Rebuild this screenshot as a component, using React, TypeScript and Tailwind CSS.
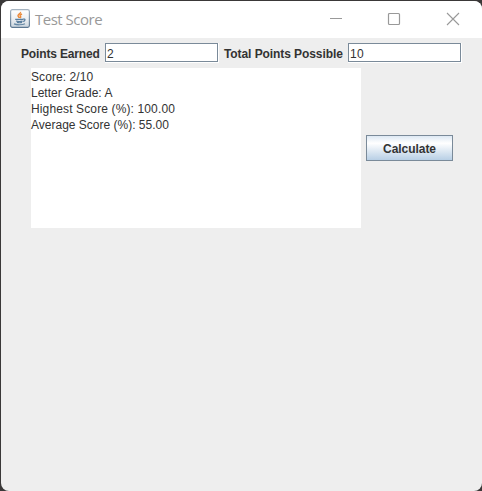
import React from "react";

function JavaIcon() {
  return (
    <svg width="20" height="19" viewBox="0 0 20 19" fill="none" className="mb-0.5 shrink-0">
      <defs>
        <linearGradient id="tile" x1="0" y1="0" x2="0" y2="1">
          <stop offset="0" stopColor="#ffffff" />
          <stop offset="0.5" stopColor="#edf0f3" />
          <stop offset="1" stopColor="#cbd5de" />
        </linearGradient>
        <linearGradient id="edge" x1="0" y1="0" x2="0" y2="1">
          <stop offset="0" stopColor="#a5b3c0" />
          <stop offset="1" stopColor="#5d7892" />
        </linearGradient>
      </defs>
      <rect x="0.6" y="0.6" width="18.8" height="17.8" rx="1.8" fill="url(#tile)" stroke="url(#edge)" strokeWidth="1.2" />
      <path d="M10.4 3c.9 1.5-2.8 2.2-2.4 3.9.2.8 1.2 1.3 1.3 2.1M12 5c-1.8.8-2.3 1.4-1.6 2.2.7.7.2 1.3-.5 1.8" stroke="#ec8b3c" strokeWidth="1.5" />
      <path d="M5.2 10.4h7.8M6 12c2 .6 4.5.6 6.5 0M7 13.4c1.6.4 3.6.4 5 0M13 10.2c2.8-.8 2.6 1.9-.2 2.3" stroke="#5b7f9f" strokeWidth="1.2" />
      <path d="M4 14.9c2.5 1.2 8.5 1.2 11-.2" stroke="#6688a5" strokeWidth="1.2" />
    </svg>
  );
}

function Field({ value }: { value: string }) {
  return (
    <div className="h-5 w-[114px] shrink-0 border-r border-b border-white">
      <div className="h-[19px] w-[113px] border border-[#7a8a99] bg-white pt-px pl-px text-[12px] leading-[19px] tracking-[0.3px]">
        {value}
      </div>
    </div>
  );
}

export default function App() {
  return (
    <div className="h-[491px] w-[482px] overflow-hidden bg-[#3a3838] pt-px pl-px font-['Liberation_Sans',Arial,sans-serif] text-[12px] text-[#333333]">
      <div className="flex h-[490px] w-[481px] flex-col overflow-hidden rounded-lg bg-[#eeeeee]">
        <header className="flex h-[37px] shrink-0 items-center bg-white pl-[9px]">
          <JavaIcon />
          <h1 className="ml-[5px] w-[295px] pb-px font-['Open_Sans','Noto_Sans',sans-serif] text-[15px] leading-5 font-normal tracking-[-0.5px] text-[#999999]">
            Test Score
          </h1>
          <svg width="132" height="15" viewBox="0 0 132 15" fill="none" stroke="#999999" className="shrink-0">
            <path d="M0 6.5h12" />
            <rect x="58.5" y="1.5" width="11" height="11" rx="1" strokeWidth="1.2" />
            <path d="M117 1l12 12M129 1l-12 12" strokeWidth="1.1" />
          </svg>
        </header>
        <div className="flex h-[30px] shrink-0 items-start pt-[5px] pl-5">
          <label className="w-[84px] shrink-0 pt-px leading-5 font-bold tracking-[-0.15px] whitespace-nowrap">Points Earned</label>
          <Field value="2" />
          <label className="ml-[5px] w-[124px] shrink-0 pt-px leading-5 font-bold tracking-[-0.08px] whitespace-nowrap">Total Points Possible</label>
          <Field value="10" />
        </div>
        <div className="flex items-center pl-[30px]">
          <div className="h-40 w-[330px] bg-white leading-4">
            <p className="pt-px tracking-[0.07px]">Score: 2/10</p>
            <p>Letter Grade: A</p>
            <p className="tracking-[0.13px]">Highest Score (%): 100.00</p>
            <p>Average Score (%): 55.00</p>
          </div>
          <button className="ml-[5px] h-[26px] w-[87px] border border-[#7a8a99] bg-linear-to-b from-[#dde8f3] via-white via-30% to-[#b8cfe5] pt-[2px] text-[12px] leading-[22px] font-bold tracking-[-0.05px]">
            Calculate
          </button>
        </div>
      </div>
    </div>
  );
}
